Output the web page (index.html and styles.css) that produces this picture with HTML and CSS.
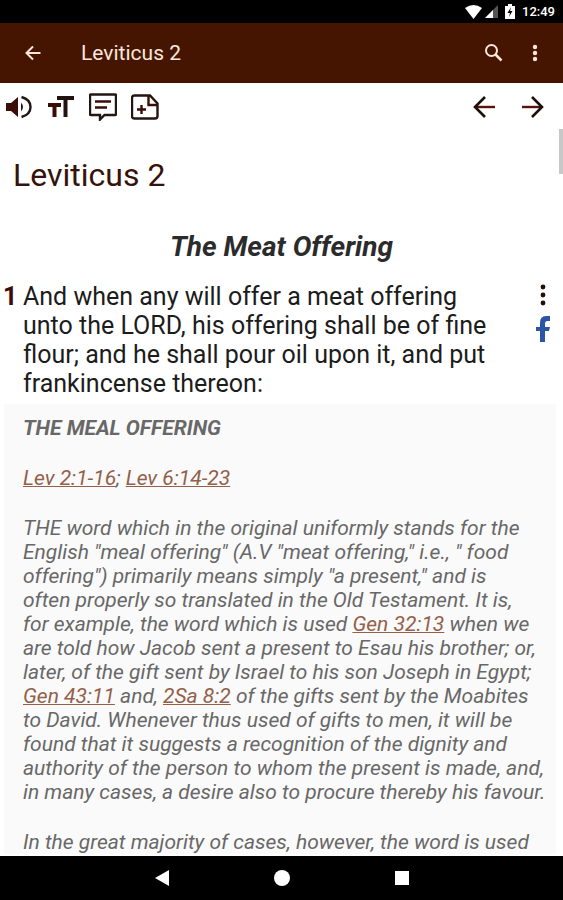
FILE: index.html
```
<!DOCTYPE html>
<html lang="en">

<head>
  <meta charset="UTF-8">
  <meta name="viewport" content="width=device-width, initial-scale=1.0">
  <title>Leviticus 2</title>
  <link rel="stylesheet" href="styles.css">
</head>

<body>
  <div class="app">
    <div class="status-bar">
      <svg width="17" height="14" viewBox="0 0 17 14"><path d="M0 3Q8.500-3 17 3L8.500 14z" fill="#fff"/></svg>
      <svg width="14" height="14" viewBox="0 0 14 14"><path d="M14 0v13H1z" fill="#555"/><path d="M9 5v8H1z" fill="#fff"/></svg>
      <svg class="battery" width="10" height="15" viewBox="0 0 10 15"><path d="M3 0h4v2h3v13H0V2h3z" fill="#fff"/><path d="M6 3L2.500 9H5l-1 4 3.500-6H5z" fill="#000"/></svg>
      <span>12:49</span>
    </div>

    <header class="app-bar">
      <button type="button" class="icon-btn" aria-label="Back">
        <svg width="18" height="18" viewBox="0 0 18 18"><path d="M16.500 9H3M9 2.500L2.500 9 9 15.500" fill="none" stroke="#fbe6da" stroke-width="2"/></svg>
      </button>
      <h2>Leviticus 2</h2>
      <button type="button" class="icon-btn" aria-label="Search">
        <svg width="20" height="20" viewBox="0 0 20 20"><circle cx="7.500" cy="7.500" r="5.500" fill="none" stroke="#fbe6da" stroke-width="2"/><path d="M11.500 11.500l6 6" stroke="#fbe6da" stroke-width="2.500"/></svg>
      </button>
      <button type="button" class="icon-btn" aria-label="More options">
        <svg width="6" height="18" viewBox="0 0 6 18"><g fill="#fbe6da"><circle cx="3" cy="3" r="2.200"/><circle cx="3" cy="9" r="2.200"/><circle cx="3" cy="15" r="2.200"/></g></svg>
      </button>
    </header>

    <main class="content">
      <div class="toolbar">
        <button type="button" class="icon-btn" aria-label="Listen">
          <svg width="28" height="28" viewBox="0 0 28 28"><path d="M1 10h5l7-6v20l-7-6H1z" fill="#3a0d06"/><path d="M16 9.500q4 4.500 0 9z" fill="#3a0d06"/><path d="M16.500 4q9 2.500 9 10t-9 10" fill="none" stroke="#221512" stroke-width="2.400"/></svg>
        </button>
        <button type="button" class="icon-btn" aria-label="Text size">
          <svg width="28" height="28" viewBox="0 0 28 28"><path d="M10 3h17v4h-6.500v17h-4V7H10z" fill="#221210"/><path d="M1 10h13v4h-4.500v10h-4V14H1z" fill="#3a0d06"/></svg>
        </button>
        <button type="button" class="icon-btn" aria-label="Commentary">
          <svg width="28" height="28" viewBox="0 0 28 28"><path d="M2 1.500h24q1 0 1 1V21q0 1-1 1H15.500L11 26.500V22H2q-1 0-1-1V2.500q0-1 1-1z" fill="none" stroke="#221512" stroke-width="2.400"/><path d="M6 8.500h16M6 14.500h12" stroke="#3a0d06" stroke-width="2.400"/></svg>
        </button>
        <button type="button" class="icon-btn" aria-label="Add note">
          <svg width="28" height="28" viewBox="0 0 28 28"><path d="M3.500 2.500H19l7.500 8V23q0 2.500-2.500 2.500H3.500Q1 25.500 1 23V5q0-2.500 2.500-2.500z" fill="none" stroke="#221512" stroke-width="2.400"/><path d="M17.500 3v9h9M10.500 12v9M6 16.500h9" fill="none" stroke="#3a0d06" stroke-width="2.400"/></svg>
        </button>
        <button type="button" class="icon-btn prev" aria-label="Previous chapter">
          <svg width="24" height="24" viewBox="0 0 24 24"><path d="M23 12H3" stroke="#5a120c" stroke-width="2.400"/><path d="M13 2L3 12l10 10" fill="none" stroke="#1c100e" stroke-width="2.600"/></svg>
        </button>
        <button type="button" class="icon-btn" aria-label="Next chapter">
          <svg width="24" height="24" viewBox="0 0 24 24"><path d="M1 12h20" stroke="#5a120c" stroke-width="2.400"/><path d="M11 2l10 10-10 10" fill="none" stroke="#1c100e" stroke-width="2.600"/></svg>
        </button>
      </div>

      <h1>Leviticus 2</h1>
      <h3>The Meat Offering</h3>

      <div class="verse">
        <span class="verse-number">1</span>
        <p>And when any will offer a meat offering unto the LORD, his offering shall be of fine flour; and he shall pour oil upon it, and put frankincense thereon:</p>
        <div class="verse-actions">
          <button type="button" class="icon-btn" aria-label="Verse options">
            <svg width="6" height="22" viewBox="0 0 6 22"><g fill="#230d0b"><circle cx="3" cy="3" r="2.400"/><circle cx="3" cy="11" r="2.400"/><circle cx="3" cy="19" r="2.400"/></g></svg>
          </button>
          <button type="button" class="icon-btn" aria-label="Share on Facebook">
            <svg width="14" height="26" viewBox="0 0 14 26"><path d="M4 26V15H0v-4h4V7q0-7 6-7h4v5h-3q-2 0-2 2.500V11h5l-1 4H9v11z" fill="#2d55a5"/></svg>
          </button>
        </div>
      </div>

      <div class="commentary">
        <h4>THE MEAL OFFERING</h4>
        <p><a href="#lev-2-1">Lev 2:1-16</a>; <a href="#lev-6-14">Lev 6:14-23</a></p>
        <p>THE word which in the original uniformly stands for the English "meal offering" (A.V "meat offering," i.e., " food offering") primarily means simply "a present," and is<br>
          often properly so translated in the Old Testament. It is,<br>
          for example, the word which is used <a href="#gen-32-13">Gen 32:13</a> when we are told how Jacob sent a present to Esau his brother; or, later, of the gift sent by Israel to his son Joseph in Egypt; <a href="#gen-43-11">Gen 43:11</a> and, <a href="#2sa-8-2">2Sa 8:2</a> of the gifts sent by the Moabites<br>
          to David. Whenever thus used of gifts to men, it will be found that it suggests a recognition of the dignity and authority of the person to whom the present is made, and,<br>
          in many cases, a desire also to procure thereby his favour.</p>
        <p>In the great majority of cases, however, the word is used</p>
      </div>
      <div class="scroll-thumb"></div>
    </main>

    <nav class="nav-bar">
      <button type="button" class="icon-btn" aria-label="Back"><svg width="16" height="16" viewBox="0 0 16 16"><path d="M15 0v16L1 8z" fill="#fff"/></svg></button>
      <button type="button" class="icon-btn" aria-label="Home"><svg width="16" height="16" viewBox="0 0 16 16"><circle cx="8" cy="8" r="8" fill="#fff"/></svg></button>
      <button type="button" class="icon-btn" aria-label="Recent apps"><svg width="16" height="16" viewBox="0 0 16 16"><path d="M1 1h14v14H1z" fill="#fff"/></svg></button>
    </nav>
  </div>
</body>

</html>
```
FILE: styles.css
```
* {
  margin: 0;
  padding: 0;
  box-sizing: border-box;
}

body {
  font-family: Roboto, sans-serif;
  background: #fff;
  color: #1c1c1c;
}

.app {
  display: flex;
  flex-direction: column;
  height: 100vh;
}

.icon-btn {
  display: flex;
  background: none;
  border: none;
  cursor: pointer;
}

.status-bar {
  display: flex;
  flex-shrink: 0;
  align-items: center;
  justify-content: flex-end;
  gap: 2px;
  height: 23px;
  padding-right: 8px;
  background: #000;
  color: #fff;
  font-size: 13px;
  font-weight: 500;
}

.battery {
  margin: 0 5px;
}

.app-bar {
  display: flex;
  flex-shrink: 0;
  align-items: center;
  gap: 28px;
  height: 60px;
  padding: 0 25px 0 24px;
  background: #451502;
}

.app-bar h2 {
  flex: 1;
  padding-left: 11px;
  color: #fbe6da;
  font-size: 21px;
  font-weight: 400;
}

.content {
  position: relative;
  flex: 1;
  min-height: 0;
  overflow: hidden;
}

.toolbar {
  display: flex;
  align-items: center;
  gap: 14px;
  padding: 10px 18px 0 5px;
}

.toolbar .prev {
  margin: 0 11px 0 auto;
}

h1 {
  margin-top: 34px;
  padding-left: 13px;
  color: #35120b;
  font-size: 32px;
  font-weight: 400;
  line-height: 40px;
}

h3 {
  margin-top: 36px;
  color: #2b2b2b;
  font-size: 28px;
  font-style: italic;
  line-height: 32px;
  text-align: center;
}

.verse {
  display: flex;
  margin-top: 19px;
  padding: 0 13px 0 3px;
  font-size: 25px;
  line-height: 29px;
}

.verse-number {
  width: 20px;
  color: #3d0a08;
  font-weight: 700;
}

.verse p {
  flex: 1;
  padding-right: 32px;
}

.verse-actions {
  display: flex;
  flex-direction: column;
  align-items: center;
  gap: 10px;
  padding-top: 2px;
}

.commentary {
  margin: 6px 7px 0 4px;
  padding: 12px 7px 0 19px;
  background: #fafafa;
  color: #686868;
  font-size: 21px;
  font-style: italic;
  line-height: 24px;
}

.commentary h4 {
  font-size: 21px;
}

.commentary p {
  margin-top: 26px;
}

.commentary a {
  color: #93604a;
  text-decoration-thickness: 1px;
}

.scroll-thumb {
  position: absolute;
  top: 46px;
  right: 0;
  width: 4px;
  height: 45px;
  background: #c8c8c8;
}

.nav-bar {
  display: flex;
  flex-shrink: 0;
  align-items: center;
  justify-content: center;
  gap: 104px;
  height: 44px;
  background: #000;
}
```
